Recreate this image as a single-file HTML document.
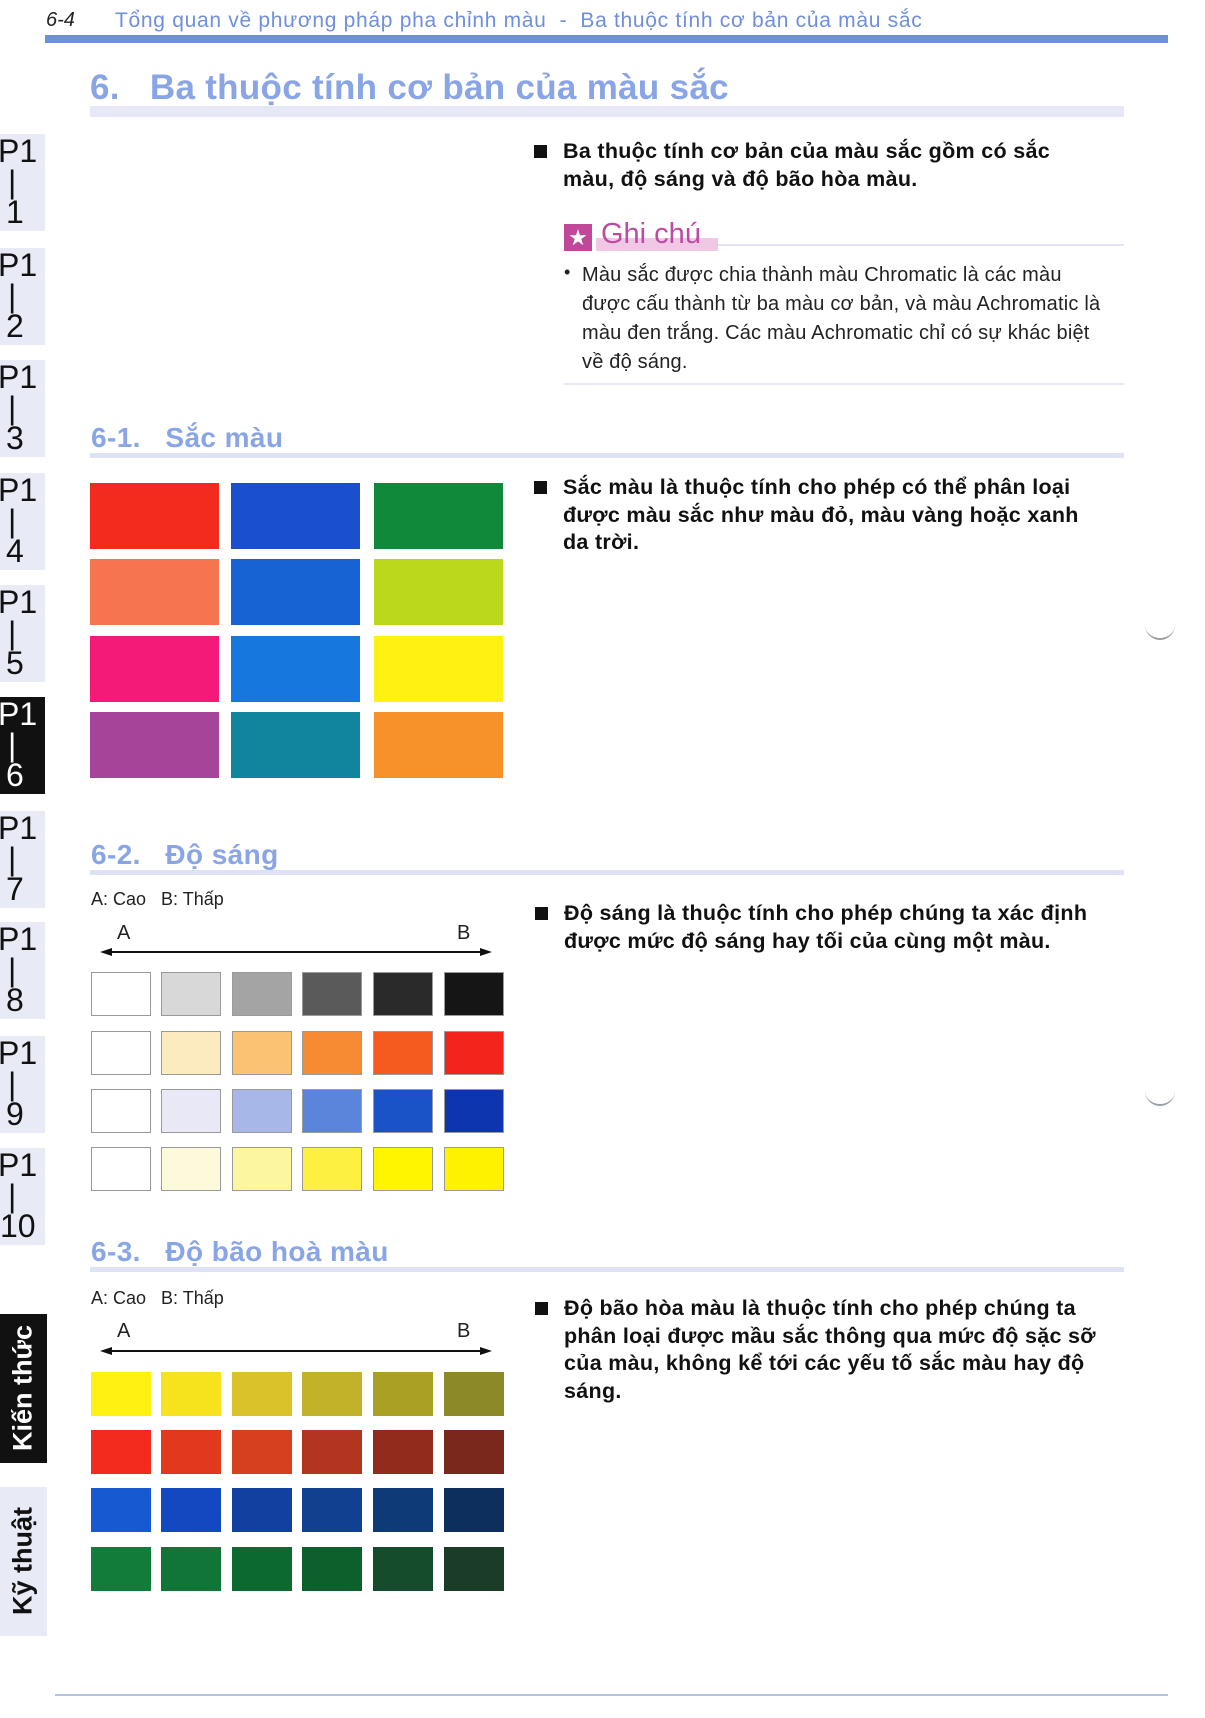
<!DOCTYPE html>
<html><head><meta charset="utf-8"><style>
*{margin:0;padding:0;box-sizing:border-box}
body{width:1205px;height:1718px;background:#fff;position:relative;overflow:hidden;font-family:"Liberation Sans",Arial,sans-serif;color:#111}
.a{position:absolute}
.tab{position:absolute;left:0;width:45px;height:97px;background:#e8eaf6;font-size:32px;line-height:31px;color:#111}
.tab span{position:absolute;left:-2px;white-space:nowrap}
.h2{position:absolute;left:91px;font-size:28px;font-weight:bold;color:#89a5e6;white-space:nowrap;letter-spacing:0.4px}
.ul{position:absolute;left:90px;width:1034px;height:5px;background:#dde2f4}
.sw{position:absolute;width:60px;height:44px}
.bt{position:absolute;font-size:21.5px;letter-spacing:0.3px;font-weight:bold;line-height:27.5px;color:#111;white-space:nowrap}
.bt:before{content:"";position:absolute;left:-29px;top:7px;width:13px;height:13px;background:#111}
.lbl{position:absolute;font-size:18px;color:#222;white-space:nowrap}
</style></head><body>
<div class="a" style="left:46px;top:9px;font-size:20px;font-style:italic;color:#222">6-4</div>
<div class="a" style="left:115px;top:9px;font-size:21px;letter-spacing:0.7px;color:#6f8ee0;white-space:nowrap">Tổng quan về phương pháp pha chỉnh màu &nbsp;- &nbsp;Ba thuộc tính cơ bản của màu sắc</div>
<div class="a" style="left:45px;top:35px;width:1123px;height:8px;background:#6e8fdc"></div>

<div class="a" style="left:90px;top:68px;font-size:35px;font-weight:bold;letter-spacing:0.3px;color:#89a5e6;white-space:nowrap">6.&nbsp;&nbsp; Ba thuộc tính cơ bản của màu sắc</div>
<div class="a" style="left:90px;top:106px;width:1034px;height:11px;background:#e6e9f5"></div>

<div class="tab" style="top:134px"><span style="top:2px">P1</span><span style="top:33px;left:8px">|</span><span style="top:63px;left:6px">1</span></div>
<div class="tab" style="top:248px"><span style="top:2px">P1</span><span style="top:33px;left:8px">|</span><span style="top:63px;left:6px">2</span></div>
<div class="tab" style="top:360px"><span style="top:2px">P1</span><span style="top:33px;left:8px">|</span><span style="top:63px;left:6px">3</span></div>
<div class="tab" style="top:473px"><span style="top:2px">P1</span><span style="top:33px;left:8px">|</span><span style="top:63px;left:6px">4</span></div>
<div class="tab" style="top:585px"><span style="top:2px">P1</span><span style="top:33px;left:8px">|</span><span style="top:63px;left:6px">5</span></div>
<div class="tab" style="top:697px;background:#111;color:#fff"><span style="top:2px">P1</span><span style="top:33px;left:8px">|</span><span style="top:63px;left:6px">6</span></div>
<div class="tab" style="top:811px"><span style="top:2px">P1</span><span style="top:33px;left:8px">|</span><span style="top:63px;left:6px">7</span></div>
<div class="tab" style="top:922px"><span style="top:2px">P1</span><span style="top:33px;left:8px">|</span><span style="top:63px;left:6px">8</span></div>
<div class="tab" style="top:1036px"><span style="top:2px">P1</span><span style="top:33px;left:8px">|</span><span style="top:63px;left:6px">9</span></div>
<div class="tab" style="top:1148px"><span style="top:2px">P1</span><span style="top:33px;left:8px">|</span><span style="top:63px;left:0px">10</span></div>

<div class="a" style="left:0;top:1314px;width:47px;height:149px;background:#111"></div>
<div class="a" style="left:23px;top:1388px;transform:translate(-50%,-50%) rotate(-90deg);color:#fff;font-weight:bold;font-size:27px;white-space:nowrap">Kiến thức</div>
<div class="a" style="left:0;top:1487px;width:47px;height:149px;background:#e8eaf6"></div>
<div class="a" style="left:23px;top:1561px;transform:translate(-50%,-50%) rotate(-90deg);color:#111;font-weight:bold;font-size:27px;white-space:nowrap">Kỹ thuật</div>

<div class="bt" style="left:563px;top:138px">Ba thuộc tính cơ bản của màu sắc gồm có sắc<br>màu, độ sáng và độ bão hòa màu.</div>

<div class="a" style="left:564px;top:224px;width:28px;height:27px;background:#c0479a;color:#fff;font-size:22px;line-height:27px;text-align:center">★</div>
<div class="a" style="left:596px;top:238px;width:122px;height:13px;background:#f0c8e6"></div>
<div class="a" style="left:601px;top:218px;font-size:29px;color:#c04aa2">Ghi chú</div>
<div class="a" style="left:718px;top:244px;width:406px;height:2px;background:#e2e5f2"></div>
<div class="a" style="left:564px;top:262px;font-size:18px;color:#222">•</div>
<div class="a" style="left:582px;top:261px;font-size:20px;letter-spacing:0.2px;line-height:29px;color:#222;white-space:nowrap">Màu sắc được chia thành màu Chromatic là các màu<br>được cấu thành từ ba màu cơ bản, và màu Achromatic là<br>màu đen trắng. Các màu Achromatic chỉ có sự khác biệt<br>về độ sáng.</div>
<div class="a" style="left:564px;top:383px;width:560px;height:2px;background:#e6e8f2"></div>

<div class="h2" style="top:422px">6-1.&nbsp;&nbsp; Sắc màu</div>
<div class="ul" style="top:453px"></div>

<div class="sw" style="left:90px;top:483px;width:129px;height:66px;background:#f32a1e"></div>
<div class="sw" style="left:231px;top:483px;width:129px;height:66px;background:#1a4fd0"></div>
<div class="sw" style="left:374px;top:483px;width:129px;height:66px;background:#108a3a"></div>
<div class="sw" style="left:90px;top:559px;width:129px;height:66px;background:#f6744e"></div>
<div class="sw" style="left:231px;top:559px;width:129px;height:66px;background:#1763d4"></div>
<div class="sw" style="left:374px;top:559px;width:129px;height:66px;background:#bcd81c"></div>
<div class="sw" style="left:90px;top:636px;width:129px;height:66px;background:#f41b78"></div>
<div class="sw" style="left:231px;top:636px;width:129px;height:66px;background:#1678dc"></div>
<div class="sw" style="left:374px;top:636px;width:129px;height:66px;background:#fff212"></div>
<div class="sw" style="left:90px;top:712px;width:129px;height:66px;background:#a6449a"></div>
<div class="sw" style="left:231px;top:712px;width:129px;height:66px;background:#11859e"></div>
<div class="sw" style="left:374px;top:712px;width:129px;height:66px;background:#f7922a"></div>

<div class="bt" style="left:563px;top:474px">Sắc màu là thuộc tính cho phép có thể phân loại<br>được màu sắc như màu đỏ, màu vàng hoặc xanh<br>da trời.</div>

<div class="a" style="left:1145px;top:618px;width:30px;height:22px;border-bottom:2px solid #9aa0aa;border-radius:0 0 15px 15px"></div>
<div class="a" style="left:1145px;top:1084px;width:30px;height:22px;border-bottom:2px solid #9aa0aa;border-radius:0 0 15px 15px"></div>

<div class="h2" style="top:839px">6-2.&nbsp;&nbsp; Độ sáng</div>
<div class="ul" style="top:870px"></div>
<div class="lbl" style="left:91px;top:889px">A: Cao &nbsp;&nbsp;B: Thấp</div>
<div class="lbl" style="left:117px;top:922px;font-size:20px">A</div>
<div class="lbl" style="left:457px;top:922px;font-size:20px">B</div>
<svg class="a" style="left:100px;top:945px" width="392" height="14"><line x1="6" y1="7" x2="386" y2="7" stroke="#111" stroke-width="2"/><path d="M0 7 L12 3 L12 11Z M392 7 L380 3 L380 11Z" fill="#111"/></svg>

<div class="bt" style="left:564px;top:900px">Độ sáng là thuộc tính cho phép chúng ta xác định<br>được mức độ sáng hay tối của cùng một màu.</div>

<div class="h2" style="top:1236px">6-3.&nbsp;&nbsp; Độ bão hoà màu</div>
<div class="ul" style="top:1267px"></div>
<div class="lbl" style="left:91px;top:1288px">A: Cao &nbsp;&nbsp;B: Thấp</div>
<div class="lbl" style="left:117px;top:1320px;font-size:20px">A</div>
<div class="lbl" style="left:457px;top:1320px;font-size:20px">B</div>
<svg class="a" style="left:100px;top:1344px" width="392" height="14"><line x1="6" y1="7" x2="386" y2="7" stroke="#111" stroke-width="2"/><path d="M0 7 L12 3 L12 11Z M392 7 L380 3 L380 11Z" fill="#111"/></svg>

<div class="bt" style="left:564px;top:1295px">Độ bão hòa màu là thuộc tính cho phép chúng ta<br>phân loại được mầu sắc thông qua mức độ sặc sỡ<br>của màu, không kể tới các yếu tố sắc màu hay độ<br>sáng.</div>

<div id="g"></div>
<script>
var xs=[91,161,232,302,373,444];
var L=[[972,["#fff","#d8d8d8","#a4a4a4","#5a5a5a","#2a2a2a","#151515"]],
[1031,["#fff","#fdebc0","#fbc272","#f78b34","#f55a1e","#f2241c"]],
[1089,["#fff","#e8e8f6","#a7b8e8","#5b85da","#1a52c8","#0d35b0"]],
[1147,["#fff","#fdfadc","#fcf6a0","#fdf040","#fff500","#fff200"]],
[1372,["#fff212","#f7e21e","#d9c22a","#c2b22a","#a9a024","#8b8a26"]],
[1430,["#f32a1e","#e2381e","#d6401e","#b33520","#922b1c","#7a281c"]],
[1488,["#1659d0","#1448c0","#1240a0","#114090","#0e3a78","#0c2f5e"]],
[1547,["#127c3a","#107536","#0c6a30","#0d5f2c","#154d2c","#1b3d28"]]];
var h="";
L.forEach(function(r,ri){r[1].forEach(function(c,i){h+='<div class="sw" style="left:'+xs[i]+'px;top:'+r[0]+'px;background:'+c+';'+(ri<4?'border:1px solid #9a9a9a':'')+'"></div>';});});
document.getElementById("g").innerHTML=h;
</script>

<div class="a" style="left:55px;top:1694px;width:1113px;height:2px;background:#b4c3ea"></div>
</body></html>
